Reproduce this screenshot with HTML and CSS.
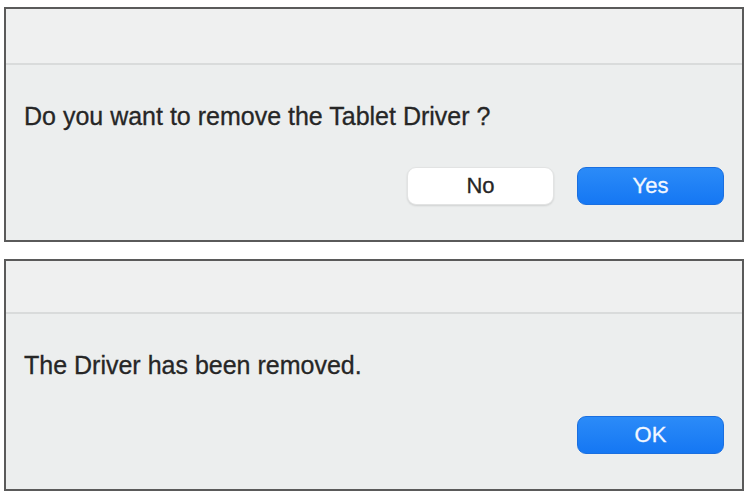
FILE: index.html
```html
<!DOCTYPE html>
<html>
<head>
<meta charset="utf-8">
<link rel="stylesheet" href="styles.css">
</head>
<body>
<div class="page">
  <div class="dialog first">
    <div class="titlebar"></div>
    <div class="content">
      <p class="message">Do you want to remove the Tablet Driver ?</p>
      <div class="actions">
        <button class="btn btn-default">No</button>
        <button class="btn btn-primary">Yes</button>
      </div>
    </div>
  </div>
  <div class="dialog second">
    <div class="titlebar"></div>
    <div class="content">
      <p class="message">The Driver has been removed.</p>
      <div class="actions">
        <button class="btn btn-primary">OK</button>
      </div>
    </div>
  </div>
</div>
</body>
</html>
```
FILE: styles.css
```css
html, body {
  margin: 0;
  padding: 0;
  background: #ffffff;
}
.page {
  width: 748px;
  height: 493px;
  padding: 7px 4px 0 4px;
  box-sizing: border-box;
  display: flex;
  flex-direction: column;
  gap: 17px;
  font-family: "Liberation Sans", Arial, sans-serif;
}
.dialog {
  border: 2px solid #5a5a5a;
  background: #eceeee;
  box-sizing: border-box;
  display: flex;
  flex-direction: column;
}
.first { height: 235px; }
.second { height: 232px; }
.titlebar {
  height: 54px;
  background: #eff0f0;
  border-bottom: 2px solid #d9dbdb;
}
.second .titlebar { height: 51px; }
.content {
  flex: 1;
  display: flex;
  flex-direction: column;
  padding: 0 18px 0 18px;
}
.message {
  margin: 36px 0 0 0;
  font-size: 25px;
  color: #262626;
  line-height: 30px;
  -webkit-text-stroke: 0.3px #262626;
}
.actions {
  display: flex;
  justify-content: flex-end;
  gap: 23px;
  margin-top: 36px;
}
.btn {
  width: 147px;
  height: 38px;
  border-radius: 9px;
  font-family: "Liberation Sans", Arial, sans-serif;
  font-size: 22px;
  padding: 0;
  cursor: default;
}
.btn-default {
  background: #ffffff;
  border: 1px solid #e2e3e3;
  color: #262626;
  -webkit-text-stroke: 0.3px #262626;
  box-shadow: 0 1px 2px rgba(0,0,0,0.12);
}
.btn-primary {
  background: linear-gradient(#2b8bf8, #1577f3);
  border: 1px solid #1a6fe0;
  color: #f2f7ff;
  -webkit-text-stroke: 0.3px #f2f7ff;
}
```
